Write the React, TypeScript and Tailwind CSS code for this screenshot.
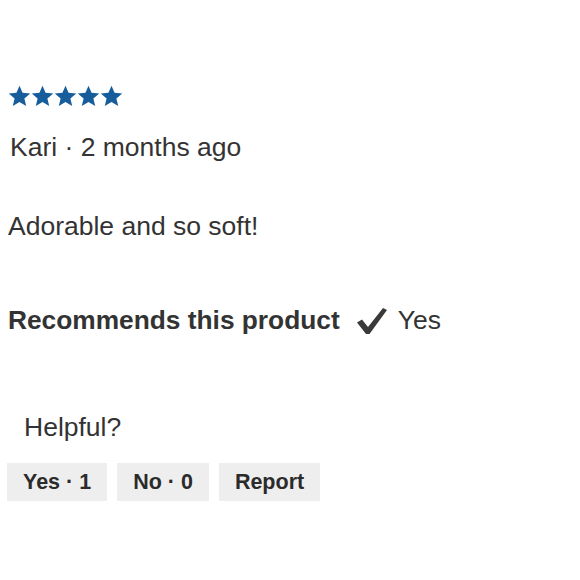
import React from "react";

function Star() {
  return (
    <svg width="23" height="23" viewBox="0 0 24 23" className="block">
      <path
        d="M12 0.3l3.2 7.3 8 0.7-6.1 5.3 1.9 7.9L12 17.3l-7 4.2 1.9-7.9-6.1-5.3 8-0.7z"
        fill="#175d9b"
      />
    </svg>
  );
}

export default function App() {
  return (
    <div
      className="w-[580px] h-[580px] bg-white text-[#333333] pl-[8px]"
      style={{ fontFamily: '"Liberation Sans", Arial, sans-serif' }}
    >
      <div className="flex pt-[85px] h-[108px]">
        {[0, 1, 2, 3, 4].map((i) => (
          <Star key={i} />
        ))}
      </div>
      <div className="mt-[24px] pl-[2px] text-[26.5px] leading-[30px]">
        Kari · 2 months ago
      </div>
      <div className="mt-[49px] text-[26.5px] leading-[30px]">
        Adorable and so soft!
      </div>
      <div className="mt-[64px] flex items-center h-[30px]">
        <span className="font-bold text-[26.3px] leading-[30px]">
          Recommends this product
        </span>
        <svg width="32" height="28" viewBox="0 0 32 28" className="ml-[16px] mt-[2px]">
          <path
            d="M1 15.5 L6 12.5 L12 20 L27 1 L31 3 L13.5 27 L10 27 Z"
            fill="#3a3a3a"
          />
        </svg>
        <span className="ml-[10px] text-[26.5px] leading-[30px]">Yes</span>
      </div>
      <div className="mt-[77px] pl-[16px] text-[26.5px] leading-[30px]">
        Helpful?
      </div>
      <div className="mt-[21px] flex gap-[10px] -ml-[1px]">
        {["Yes · 1", "No · 0", "Report"].map((t) => (
          <div
            key={t}
            className="h-[38px] px-[16px] bg-[#eeeeee] flex items-center font-bold text-[21.5px] text-[#2b2b2b]"
          >
            {t}
          </div>
        ))}
      </div>
    </div>
  );
}
